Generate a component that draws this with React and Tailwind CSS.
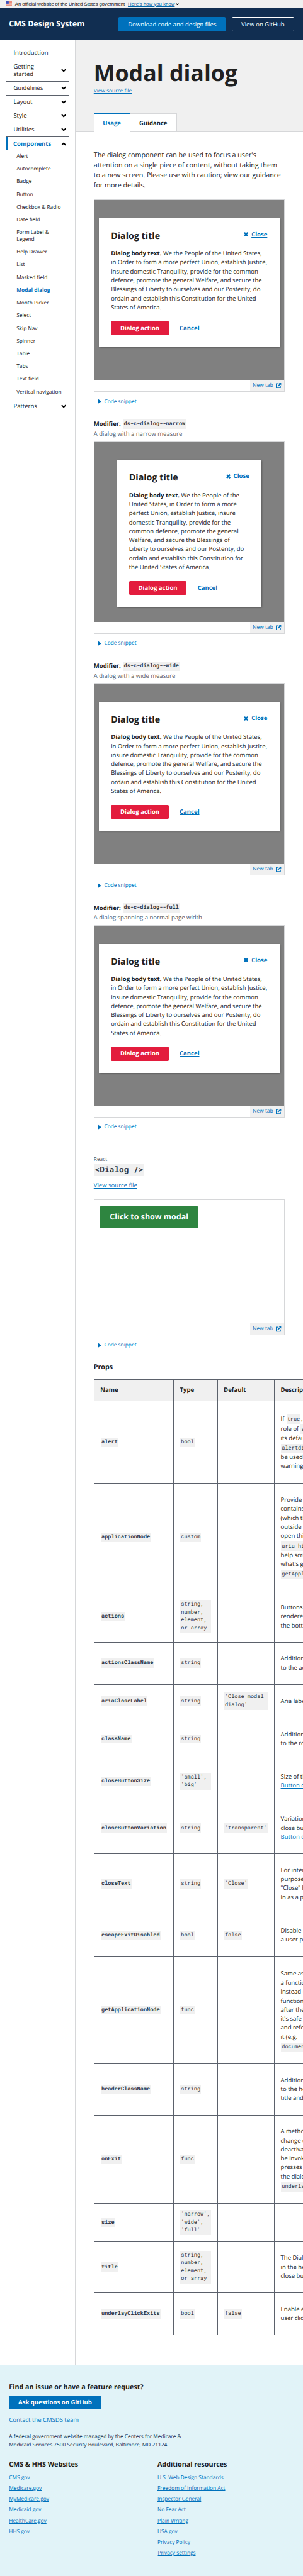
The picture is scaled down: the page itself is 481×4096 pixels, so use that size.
const link = "text-[#0071bc] underline underline-offset-2";
const code = "mx-px inline-block bg-[#f0f0f0] p-[2px] font-['Roboto_Mono','Liberation_Mono',monospace] text-[14.4px] leading-[21px] text-[#323a45]";

const Chevron = ({ up }) => (
  <svg viewBox="0 0 14 10" className={up ? "h-[10px] w-[14px] rotate-180" : "h-[10px] w-[14px]"}>
    <path d="M1.6 1.8 L7 7.4 L12.4 1.8" fill="none" stroke="#000" strokeWidth="3.2" />
  </svg>
);

const Banner = () => (
  <div className="flex h-[22px] items-center bg-[#f0f0f0] pl-4 font-['Liberation_Sans',sans-serif] text-[13px] leading-[22px]">
    <svg viewBox="0 0 16 11" className="mr-2 mb-[3px] h-[11px] w-4">
      <rect width="16" height="11" fill="#fff" />
      {[0, 2, 4, 6, 8, 10].map((y) => (
        <rect key={y} y={y} width="16" height="1" fill="#db3e1f" />
      ))}
      <rect width="8" height="7" fill="#1e33b1" />
      {[1, 3, 5].map((y) =>
        [1, 3, 5].map((x) => <rect key={`${x}-${y}`} x={x} y={y} width="1" height="1" fill="#fff" />)
      )}
    </svg>
    <span>An official website of the United States government</span>
    <span className="ml-2 tracking-[0.1px] text-[#0065a8] underline underline-offset-2">Here’s how you know</span>
    <svg viewBox="0 0 14 10" className="ml-[2px] h-[6px] w-[9px]">
      <path d="M1.8 1.8 L7 7.6 L12.2 1.8" fill="none" stroke="#000" strokeWidth="3.4" />
    </svg>
  </div>
);

const Header = () => (
  <header className="flex h-[86px] items-center bg-[#112e51] pr-6 pl-6 text-white">
    <div className="text-[21px] font-bold">CMS Design System</div>
    <div className="ml-auto flex h-[38px] w-[286px] items-center justify-center rounded-[3px] bg-[#0071bc] text-base">Download code and design files</div>
    <div className="ml-4 flex h-[38px] w-[166px] items-center justify-center rounded-[3px] border border-white text-base">View on GitHub</div>
  </header>
);

const sections = ["Getting started", "Guidelines", "Layout", "Style", "Utilities"];
const components = ["Alert", "Autocomplete", "Badge", "Button", "Checkbox & Radio", "Date field", "Form Label & Legend", "Help Drawer", "List", "Masked field", "Modal dialog", "Month Picker", "Select", "Skip Nav", "Spinner", "Table", "Tabs", "Text field", "Vertical navigation"];

const Sidebar = () => (
  <nav className="w-[202px] shrink-0 border-r border-[#d6d7d9] pt-4 pr-4 pl-4 text-base leading-5">
    <div className="flex h-[37px] items-center border-b border-[#5b616b] pl-5">Introduction</div>
    {sections.map((s) => (
      <div key={s} className={s === "Getting started" ? "flex h-[57px] items-center justify-between border-b border-[#5b616b] pr-2 pl-5" : "flex h-[37px] items-center justify-between border-b border-[#5b616b] pr-2 pl-5"}>
        <span className="max-w-[90px]">{s}</span>
        <Chevron />
      </div>
    ))}
    <div className="flex h-9 items-center justify-between border-l-4 border-[#0071bc] pr-2 pl-4 font-bold text-[#0071bc]">
      Components
      <Chevron up />
    </div>
    <ul className="text-sm leading-[18px]">
      {components.map((c) => (
        <li key={c} className={c === "Modal dialog" ? "py-2 pl-7 font-bold text-[#0071bc]" : "py-2 pl-7"}>
          <span className={c.startsWith("Form") ? "block max-w-[100px]" : "block whitespace-nowrap"}>{c}</span>
        </li>
      ))}
    </ul>
    <div className="flex h-[37px] items-center justify-between border-t border-[#5b616b] pr-2 pl-5">
      Patterns
      <Chevron />
    </div>
  </nav>
);

const NewTab = () => (
  <div className="flex h-[30px] shrink-0 justify-end">
    <div className="flex w-[92px] items-center justify-between bg-[#f0f0f0] px-2 text-sm text-[#0071bc]">
      New tab
      <svg viewBox="0 0 14 14" className="h-[14px] w-[14px]">
        <path d="M7 2 H1 V13 H12 V8" fill="none" stroke="currentColor" strokeWidth="2" />
        <path d="M8 0 H14 V6 L12 4 L6.2 9.8 L4.2 7.8 L10 2 Z" fill="currentColor" />
      </svg>
    </div>
  </div>
);

const Snippet = () => (
  <div className="mt-4 flex h-5 items-center pl-[10px] text-sm text-[#0071bc]">
    <svg viewBox="0 0 10 14" className="mr-2 h-[14px] w-[10px]"><path d="M0 0 L10 7 L0 14 Z" fill="currentColor" /></svg>
    Code snippet
  </div>
);

const Dialog = ({ narrow }) => (
  <div className={narrow ? "mx-auto w-[386px] bg-white p-8 shadow-[1px_2px_5px_rgba(0,0,0,0.4)]" : "mx-auto w-[482px] bg-white p-8 shadow-[1px_2px_5px_rgba(0,0,0,0.4)]"}>
    <div className="mb-[17px] flex h-[34px] justify-between">
      <div className="text-2xl leading-[34px] font-bold">Dialog title</div>
      <div className="mr-px flex h-6 items-center gap-2 text-base font-bold text-[#0071bc]">
        <svg viewBox="0 0 12 12" className="h-3 w-3"><path d="M1.6 1.6 L10.4 10.4 M10.4 1.6 L1.6 10.4" stroke="currentColor" strokeWidth="4" /></svg>
        <span className="underline underline-offset-2">Close</span>
      </div>
    </div>
    <p className="mr-[-8px] text-base leading-6">
      <b>Dialog body text.</b> We the People of the{narrow ? <br /> : " "}United States,{narrow ? " " : <br />}in Order to form a more{narrow ? <br /> : " "}perfect Union, establish Justice,{narrow ? " " : <br />}insure{narrow ? <br /> : " "}domestic Tranquility, provide for the{narrow ? <br /> : " "}common{narrow ? " " : <br />}defence, promote the general{narrow ? <br /> : " "}Welfare, and secure the{narrow ? " " : <br />}Blessings of{narrow ? <br /> : " "}Liberty to ourselves and our Posterity, do<br />ordain and establish this Constitution for{narrow ? <br /> : " "}the United{narrow ? " " : <br />}States of America.
    </p>
    <div className="mt-6 flex items-center text-base font-bold">
      <div className="flex h-[38px] w-[154px] items-center justify-center rounded-[3px] bg-[#e31c3d] text-white">Dialog action</div>
      <span className="ml-[29px] text-[#0071bc] underline underline-offset-2">Cancel</span>
    </div>
  </div>
);

const Preview = ({ narrow }) => (
  <>
    <div className="flex h-[514px] w-[510px] flex-col border border-[#d6d7d9]">
      <div className="min-h-0 flex-1 bg-[#808080] pt-12"><Dialog narrow={narrow} /></div>
      <NewTab />
    </div>
    <Snippet />
  </>
);

const Modifier = ({ name, text, narrow }) => (
  <section>
    <div className="mt-[37.3px] flex h-[26px] items-center text-base font-bold">
      Modifier:<code className="ml-[6px] bg-[#f0f0f0] p-[2px] font-['Roboto_Mono','Liberation_Mono',monospace] text-[14.4px] leading-[21px] text-[#323a45]">{name}</code>
    </div>
    <div className="mb-[7px] h-[26px] text-base leading-[26px] text-[#5b616b]">{text}</div>
    <Preview narrow={narrow} />
  </section>
);

const C = (t) => ({ code: t });
const L = (t) => ({ link: t });
const rows = [
  ["alert", "bool", "", "h-[220.3px]", [["If ", C("true"), ", "], ["role of ", C("alert")], ["its default"], [C("alertdialog")], ["be used"], ["warning"]]],
  ["applicationNode", "custom", "", "h-[287.4px]", [["Provide"], ["contains"], ["(which the"], ["outside"], ["open this"], [C("aria-hidden")], ["help screen"], ["what's going"], [C("getApplicationNode")]]],
  ["actions", "string, number, element, or array", "", "h-[136.9px]", [["Buttons"], ["rendered"], ["the bottom"]]],
  ["actionsClassName", "string", "", "h-[112.8px]", [["Additional"], ["to the actions"]]],
  ["ariaCloseLabel", "string", "'Close modal dialog'", "h-[89.3px]", [["Aria label"]]],
  ["className", "string", "", "h-[113px]", [["Additional"], ["to the root"]]],
  ["closeButtonSize", "'small', 'big'", "", "h-[113.1px]", [["Size of the"], [L("Button component")]]],
  ["closeButtonVariation", "string", "'transparent'", "h-[137.2px]", [["Variation"], ["close button"], [L("Button component")]]],
  ["closeText", "string", "'Close'", "h-[160.7px]", [["For internal"], ["purposes"], ["\"Close\" but"], ["in as a prop"]]],
  ["escapeExitDisabled", "bool", "false", "h-[113.1px]", [["Disable"], ["a user presses"]]],
  ["getApplicationNode", "func", "", "h-[287px]", [["Same as ", C("applicationNode")], ["a function"], ["instead of"], ["function"], ["after the"], ["it's safe"], ["and reference"], ["it (e.g."], [C("document")]]],
  ["headerClassName", "string", "", "h-[137.1px]", [["Additional"], ["to the header"], ["title and"]]],
  ["onExit", "func", "", "h-[235.9px]", [["A method"], ["change or"], ["deactivate"], ["be invoked"], ["presses"], ["the dialog"], [C("underlayClickExits")]]],
  ["size", "'narrow', 'wide', 'full'", "", "h-[102px]", []],
  ["title", "string, number, element, or array", "", "h-[137.1px]", [["The Dialog"], ["in the header"], ["close button"]]],
  ["underlayClickExits", "bool", "false", "h-[112.9px]", [["Enable exit"], ["user clicks"]]],
];

const Cell = ({ children }) => <div className="flex items-center border-r border-b border-[#5b616b] pr-[15px] pl-4">{children}</div>;

const Part = ({ part }) => {
  if (typeof part === "string") return part;
  return part.code ? <code className={code}>{part.code}</code> : <span className={link}>{part.link}</span>;
};

const Line = ({ parts }) => (
  <div className={parts.some((p) => typeof p !== "string" && p.code) ? "h-[27px] leading-[27px] whitespace-pre" : "h-6 leading-6 whitespace-pre"}>
    {parts.map((p, i) => <Part key={i} part={p} />)}
  </div>
);

const cols = "grid grid-cols-[212px_117px_152px_200px]";

const PropsTable = () => (
  <div className="w-[558px] overflow-hidden border-t border-l border-[#5b616b]">
    <div className={`${cols} h-[57.4px] bg-[#f0f0f0] text-base font-bold`}>
      <Cell>Name</Cell><Cell>Type</Cell><Cell>Default</Cell><Cell>Description</Cell>
    </div>
    {rows.map(([name, type, def, height, desc]) => (
      <div key={name} className={`${cols} ${height}`}>
        <Cell><code className={`${code} font-bold`}>{name}</code></Cell>
        <Cell><code className={code}>{type}</code></Cell>
        <Cell>{def && <code className={code}>{def}</code>}</Cell>
        <Cell><div className="text-base">{desc.map((parts, i) => <Line key={i} parts={parts} />)}</div></Cell>
      </div>
    ))}
  </div>
);

const Main = () => (
  <main className="min-w-0 flex-1">
    <div className="flex h-[245px] flex-col border-b border-[#d6d7d9] bg-[#f0f0f0] pl-12">
      <h1 className="mt-[50px] h-[76px] text-[60px] leading-[76px] font-bold">Modal dialog</h1>
      <div className="h-5 text-sm leading-5"><span className={link}>View source file</span></div>
      <div className="mt-auto mb-[-1px] flex h-[50px] text-base leading-[46px] font-bold">
        <div className="w-[97px] border-t-4 border-r border-l border-t-[#0071bc] border-r-[#d6d7d9] border-l-[#d6d7d9] bg-white text-center text-[#0071bc]">Usage</div>
        <div className="h-[49px] w-[125px] border-t border-r border-[#d6d7d9] bg-white pt-[2px] text-center">Guidance</div>
      </div>
    </div>
    <div className="pl-12">
      <p className="mt-[48px] h-[132px] text-lg leading-[27px]">
        The dialog component can be used to focus a user's<br />attention on a single piece of content, without taking them<br />to a new screen. Please use with caution; view our guidance<br />for more details.
      </p>
      <Preview />
      <Modifier name="ds-c-dialog--narrow" text="A dialog with a narrow measure" narrow />
      <Modifier name="ds-c-dialog--wide" text="A dialog with a wide measure" />
      <Modifier name="ds-c-dialog--full" text="A dialog spanning a normal page width" />
      <div className="mt-[67px] h-5 text-sm leading-5 text-[#5b616b]">React</div>
      <code className="mt-[2px] ml-px block h-[32px] w-[134px] bg-[#f0f0f0] px-[2px] font-['Roboto_Mono','Liberation_Mono',monospace] text-[21.6px] leading-[32px] font-bold text-[#323a45]">{"<Dialog />"}</code>
      <div className="mt-[13px] h-6 text-base leading-6"><span className={link}>View source file</span></div>
      <div className="mt-[24px] flex h-[364px] w-[510px] flex-col justify-between border border-[#d6d7d9]">
        <div className="mt-4 ml-4 flex h-[61px] w-[260px] items-center justify-center rounded-[3px] bg-[#2e8540] text-[21px] font-bold text-white">Click to show modal</div>
        <NewTab />
      </div>
      <Snippet />
      <h2 className="mt-[37px] mb-[19px] h-[25px] text-lg leading-[25px] font-bold">Props</h2>
      <PropsTable />
    </div>
  </main>
);

const sites = ["CMS.gov", "Medicare.gov", "MyMedicare.gov", "Medicaid.gov", "HealthCare.gov", "HHS.gov"];
const resources = ["U.S. Web Design Standards", "Freedom of Information Act", "Inspector General", "No Fear Act", "Plain Writing", "USA.gov", "Privacy Policy", "Privacy settings"];

const LinkList = ({ title, items }) => (
  <div className="w-[396px] shrink-0">
    <h3 className="mb-[5px] h-[26px] text-lg leading-[26px] font-bold">{title}</h3>
    {items.map((t) => (
      <div key={t} className={t === "Privacy settings" ? "h-[29px] pl-px leading-[29px]" : "h-[29px] leading-[29px]"}><span className={link}>{t}</span></div>
    ))}
  </div>
);

const Footer = () => (
  <footer className="h-[563px] bg-[#e1f3f8] px-6 pt-[47px]">
    <h2 className="h-[26px] text-lg leading-[26px] font-bold">Find an issue or have a feature request?</h2>
    <div className="mt-[7px] flex h-[38px] w-[246px] items-center justify-center rounded-[3px] bg-[#0071bc] text-base font-bold text-white">Ask questions on GitHub</div>
    <div className="mt-4 h-6 text-base leading-6"><span className={link}>Contact the CMSDS team</span></div>
    <p className="mt-[24px] w-[480px] text-sm leading-[21px] text-[#112e51]">A federal government website managed by the Centers for Medicare &amp;<br />Medicaid Services 7500 Security Boulevard, Baltimore, MD 21124</p>
    <div className="mt-[30px] flex text-sm">
      <LinkList title="CMS & HHS Websites" items={sites} />
      <LinkList title="Additional resources" items={resources} />
    </div>
  </footer>
);

export default function App() {
  return (
    <div className="w-[808.2px] overflow-hidden bg-white font-['Open_Sans',sans-serif] text-[#212121] [text-rendering:geometricPrecision] [zoom:0.5952]">
      <Banner />
      <Header />
      <div className="flex h-[6211px]">
        <Sidebar />
        <Main />
      </div>
      <Footer />
    </div>
  );
}
